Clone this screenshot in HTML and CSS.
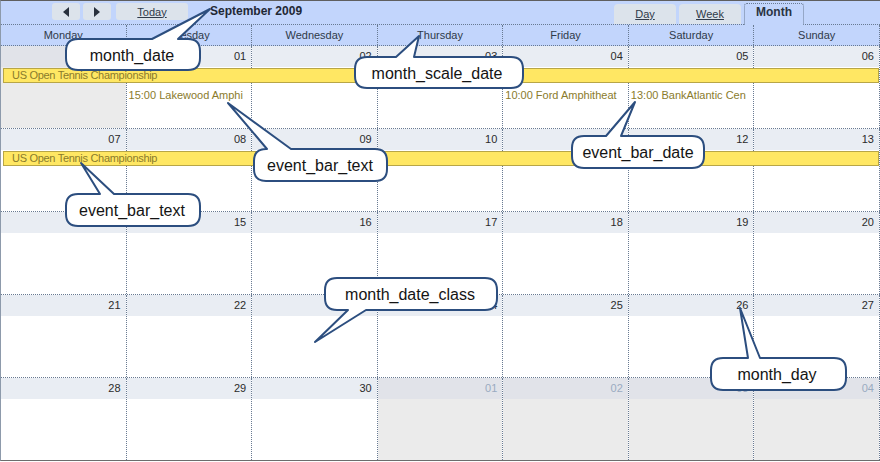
FILE: index.html
```html
<!DOCTYPE html>
<html>
<head>
<meta charset="utf-8">
<title>Scheduler - Month</title>
<link rel="stylesheet" href="styles.css">
</head>
<body>
<div class="page">
  <div class="scheduler">
    <div class="nav">
      <div class="btn arrow"><svg width="6" height="10" viewBox="0 0 6 10"><polygon points="6,0 6,10 0,5" fill="#29313d"/></svg></div>
      <div class="btn arrow next"><svg width="6" height="10" viewBox="0 0 6 10"><polygon points="0,0 0,10 6,5" fill="#29313d"/></svg></div>
      <div class="btn today"><span class="u">Today</span></div>
      <div class="title">September 2009</div>
      <div class="tabs">
        <div class="tab"><span class="u">Day</span></div>
        <div class="tab"><span class="u">Week</span></div>
        <div class="tab active">Month</div>
      </div>
    </div>
    <div class="daynames">
      <div class="dayname">Monday</div>
      <div class="dayname">Tuesday</div>
      <div class="dayname">Wednesday</div>
      <div class="dayname">Thursday</div>
      <div class="dayname">Friday</div>
      <div class="dayname">Saturday</div>
      <div class="dayname">Sunday</div>
    </div>
    <div class="weeks">
      <div class="week">
        <div class="cell other"><div class="date">31</div><div class="body"></div></div>
        <div class="cell"><div class="date">01</div><div class="body"></div></div>
        <div class="cell"><div class="date">02</div><div class="body"></div></div>
        <div class="cell"><div class="date">03</div><div class="body"></div></div>
        <div class="cell"><div class="date">04</div><div class="body"></div></div>
        <div class="cell"><div class="date">05</div><div class="body"></div></div>
        <div class="cell"><div class="date">06</div><div class="body"></div></div>
        <div class="bar">US Open Tennis Championship</div>
        <div class="ev col2">15:00 Lakewood Amphi</div>
        <div class="ev col5">10:00 Ford Amphitheat</div>
        <div class="ev col6">13:00 BankAtlantic Cen</div>
      </div>
      <div class="week">
        <div class="cell"><div class="date">07</div><div class="body"></div></div>
        <div class="cell"><div class="date">08</div><div class="body"></div></div>
        <div class="cell"><div class="date">09</div><div class="body"></div></div>
        <div class="cell"><div class="date">10</div><div class="body"></div></div>
        <div class="cell"><div class="date">11</div><div class="body"></div></div>
        <div class="cell"><div class="date">12</div><div class="body"></div></div>
        <div class="cell"><div class="date">13</div><div class="body"></div></div>
        <div class="bar">US Open Tennis Championship</div>
      </div>
      <div class="week">
        <div class="cell"><div class="date">14</div><div class="body"></div></div>
        <div class="cell"><div class="date">15</div><div class="body"></div></div>
        <div class="cell"><div class="date">16</div><div class="body"></div></div>
        <div class="cell"><div class="date">17</div><div class="body"></div></div>
        <div class="cell"><div class="date">18</div><div class="body"></div></div>
        <div class="cell"><div class="date">19</div><div class="body"></div></div>
        <div class="cell"><div class="date">20</div><div class="body"></div></div>
      </div>
      <div class="week">
        <div class="cell"><div class="date">21</div><div class="body"></div></div>
        <div class="cell"><div class="date">22</div><div class="body"></div></div>
        <div class="cell"><div class="date">23</div><div class="body"></div></div>
        <div class="cell"><div class="date">24</div><div class="body"></div></div>
        <div class="cell"><div class="date">25</div><div class="body"></div></div>
        <div class="cell"><div class="date">26</div><div class="body"></div></div>
        <div class="cell"><div class="date">27</div><div class="body"></div></div>
      </div>
      <div class="week">
        <div class="cell"><div class="date">28</div><div class="body"></div></div>
        <div class="cell"><div class="date">29</div><div class="body"></div></div>
        <div class="cell"><div class="date">30</div><div class="body"></div></div>
        <div class="cell other"><div class="date">01</div><div class="body"></div></div>
        <div class="cell other"><div class="date">02</div><div class="body"></div></div>
        <div class="cell other"><div class="date">03</div><div class="body"></div></div>
        <div class="cell other"><div class="date">04</div><div class="body"></div></div>
      </div>
    </div>
  </div>

  <svg class="callouts" width="880" height="462" viewBox="0 0 880 462">
    <g class="bubble">
      <path d="M78,39 L152,39 L210,9 L178,39 L188,39 Q200,39 200,51 L200,58 Q200,70 188,70 L78,70 Q66,70 66,58 L66,51 Q66,39 78,39 Z"/>
      <path d="M367,57 L396,57 L419,36 L414,57 L511,57 Q523,57 523,69 L523,76 Q523,88 511,88 L367,88 Q355,88 355,76 L355,69 Q355,57 367,57 Z"/>
      <path d="M266,149 L267,149 L228,103 L291,149 L375,149 Q387,149 387,161 L387,169 Q387,181 375,181 L266,181 Q254,181 254,169 L254,161 Q254,149 266,149 Z"/>
      <path d="M584,136 L606,136 L635,102 L621,136 L692,136 Q704,136 704,148 L704,156 Q704,168 692,168 L584,168 Q572,168 572,156 L572,148 Q572,136 584,136 Z"/>
      <path d="M78,194 L100,194 L81,163 L114,194 L188,194 Q200,194 200,206 L200,214 Q200,226 188,226 L78,226 Q66,226 66,214 L66,206 Q66,194 78,194 Z"/>
      <path d="M337,278 L485,278 Q497,278 497,290 L497,298 Q497,310 485,310 L366,310 L315,342 L348,310 L337,310 Q325,310 325,298 L325,290 Q325,278 337,278 Z"/>
      <path d="M723,358 L748,358 L740,308 L760,358 L834,358 Q846,358 846,370 L846,378 Q846,390 834,390 L723,390 Q711,390 711,378 L711,370 Q711,358 723,358 Z"/>
    </g>
    <g class="label">
      <text x="132" y="55">month_date</text>
      <text x="437" y="73">month_scale_date</text>
      <text x="320" y="165">event_bar_text</text>
      <text x="638" y="152">event_bar_date</text>
      <text x="132" y="210">event_bar_text</text>
      <text x="410" y="294">month_date_class</text>
      <text x="777" y="374">month_day</text>
    </g>
  </svg>
</div>
</body>
</html>
```

FILE: styles.css
```css
* { box-sizing: border-box; }

html, body {
  margin: 0;
  padding: 0;
  background: #ffffff;
}

body {
  font-family: "Liberation Sans", Arial, sans-serif;
  font-size: 11px;
  color: #2f3a49;
}

.page {
  position: relative;
  width: 880px;
  height: 462px;
}

.scheduler {
  width: 880px;
  border-top: 1px solid #5f5f5f;
  border-bottom: 1px solid #6d6d6d;
  border-left: 1px solid #8d9aab;
}

/* ---------- navigation line ---------- */
.nav {
  display: flex;
  align-items: flex-start;
  height: 24px;
  padding-left: 51px;
  background: #c2d5fc;
  border-bottom: 1px dotted #687a92;
}

.btn {
  display: flex;
  align-items: center;
  justify-content: center;
  margin-top: 2px;
  height: 17px;
  background: #dce3eb;
  border-radius: 3px;
  color: #2f3a49;
}

.arrow { width: 28px; }
.arrow.next { margin-left: 3px; }
.today { width: 72px; margin-left: 5px; }

.u { text-decoration: underline; }

.title {
  margin-left: 22px;
  margin-top: 2px;
  line-height: 17px;
  font-size: 12px;
  font-weight: bold;
  color: #1f2835;
}

.tabs {
  display: flex;
  align-items: flex-end;
  align-self: flex-end;
  gap: 3px;
  margin-left: auto;
  margin-right: 76px;
}

.tab {
  width: 62px;
  height: 20px;
  line-height: 20px;
  text-align: center;
  background: #dce3eb;
  border-radius: 4px 4px 0 0;
}

.tab.active {
  width: 60px;
  height: 22px;
  margin-bottom: -1px;
  line-height: 16px;
  font-size: 12px;
  font-weight: bold;
  background: #c2d5fc;
  border: 1px dotted #687a92;
  border-bottom: none;
  border-radius: 3px 3px 0 0;
  color: #2a3442;
}

/* ---------- day names ---------- */
.daynames {
  display: grid;
  grid-template-columns: repeat(7, 1fr);
  height: 21px;
  background: #c2d5fc;
  border-bottom: 1px dotted #687a92;
}

.dayname {
  line-height: 20px;
  text-align: center;
  border-right: 1px dotted #687a92;
}

/* ---------- month grid ---------- */
.week {
  display: grid;
  grid-template-columns: repeat(7, 1fr);
  grid-template-rows: 21px 1px 15px 4px 16px 1fr;
  height: 83px;
  border-bottom: 1px dotted #687a92;
}

.week:last-child {
  height: 82px;
  border-bottom: none;
}

.cell {
  grid-row: 1 / -1;
  display: flex;
  flex-direction: column;
  min-width: 0;
  border-right: 1px dotted #687a92;
}

.cell:nth-child(1) { grid-column: 1; }
.cell:nth-child(2) { grid-column: 2; }
.cell:nth-child(3) { grid-column: 3; }
.cell:nth-child(4) { grid-column: 4; }
.cell:nth-child(5) { grid-column: 5; }
.cell:nth-child(6) { grid-column: 6; }
.cell:nth-child(7) { grid-column: 7; }

.date {
  height: 21px;
  line-height: 21px;
  padding-right: 5px;
  text-align: right;
  background: #e9edf3;
  color: #2b2b2b;
}

.body {
  flex: 1;
  background: #ffffff;
}

.cell.other .date {
  background: #e1e3e9;
  color: #9aabc1;
}

.cell.other .body {
  background: #ebebeb;
}

.bar {
  grid-column: 1 / -1;
  grid-row: 3;
  min-width: 0;
  margin: 0 1px 0 2px;
  padding-left: 8px;
  line-height: 13px;
  white-space: nowrap;
  overflow: hidden;
  letter-spacing: -0.3px;
  background: #ffe763;
  border: 1px solid #b8a646;
  color: #8a7b2c;
}

.ev {
  grid-row: 5;
  min-width: 0;
  padding-left: 2px;
  line-height: 16px;
  white-space: nowrap;
  overflow: hidden;
  color: #8a7b2c;
}

.col2 { grid-column: 2; }
.col5 { grid-column: 5; }
.col6 { grid-column: 6; }

/* ---------- callouts overlay ---------- */
.callouts {
  position: absolute;
  left: 0;
  top: 0;
  pointer-events: none;
}

.bubble path {
  fill: #ffffff;
  stroke: #2c4e7f;
  stroke-width: 2;
  stroke-linejoin: round;
}

.label text {
  font-family: "Liberation Sans", Arial, sans-serif;
  font-size: 16px;
  fill: #141414;
  text-anchor: middle;
  dominant-baseline: central;
}
```
